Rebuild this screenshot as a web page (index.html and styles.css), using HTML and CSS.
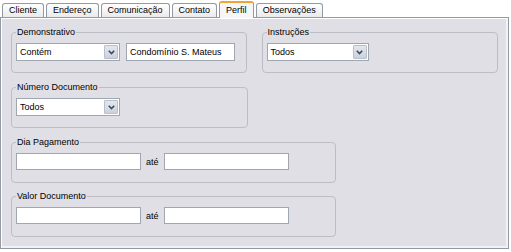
FILE: index.html
```html
<!DOCTYPE html>
<html lang="pt-BR">
<head>
  <meta charset="UTF-8">
  <title>Perfil</title>
  <link rel="stylesheet" href="styles.css">
</head>
<body>

  <div class="window">
    <div class="tabs">
      <div class="tab">Cliente</div>
      <div class="tab">Endereço</div>
      <div class="tab">Comunicação</div>
      <div class="tab">Contato</div>
      <div class="tab active">Perfil</div>
      <div class="tab">Observações</div>
    </div>

    <div class="panel">
      <div class="row">
        <fieldset class="group group-half">
          <legend>Demonstrativo</legend>
          <div class="line">
            <div class="combo combo-sm">
              <span class="combo-text">Contém</span>
              <span class="arrow"><svg width="7" height="5" viewBox="0 0 7 5"><path d="M0.8 0.8 L3.5 3.6 L6.2 0.8" fill="none" stroke="#3d4a63" stroke-width="1.6"/></svg></span>
            </div>
            <div class="field field-sm">Condomínio S. Mateus</div>
          </div>
        </fieldset>

        <fieldset class="group group-half group-right">
          <legend>Instruções</legend>
          <div class="line">
            <div class="combo combo-xs">
              <span class="combo-text">Todos</span>
              <span class="arrow"><svg width="7" height="5" viewBox="0 0 7 5"><path d="M0.8 0.8 L3.5 3.6 L6.2 0.8" fill="none" stroke="#3d4a63" stroke-width="1.6"/></svg></span>
            </div>
          </div>
        </fieldset>
      </div>

      <fieldset class="group group-half">
        <legend>Número Documento</legend>
        <div class="line">
          <div class="combo combo-sm">
            <span class="combo-text">Todos</span>
            <span class="arrow"><svg width="7" height="5" viewBox="0 0 7 5"><path d="M0.8 0.8 L3.5 3.6 L6.2 0.8" fill="none" stroke="#3d4a63" stroke-width="1.6"/></svg></span>
          </div>
        </div>
      </fieldset>

      <fieldset class="group group-wide">
        <legend>Dia Pagamento</legend>
        <div class="line">
          <div class="field field-md"></div>
          <span class="sep">até</span>
          <div class="field field-md"></div>
        </div>
      </fieldset>

      <fieldset class="group group-wide">
        <legend>Valor Documento</legend>
        <div class="line">
          <div class="field field-md"></div>
          <span class="sep">até</span>
          <div class="field field-md"></div>
        </div>
      </fieldset>
    </div>
  </div>

</body>
</html>
```

FILE: styles.css
```css
html, body {
  margin: 0;
  padding: 0;
  background: #fff;
  font-family: "Liberation Sans", Arial, sans-serif;
  font-size: 9px;
  color: #000;
}

.window {
  width: 509px;
}

/* tabs */
.tabs {
  display: flex;
  align-items: flex-end;
  gap: 2px;
  height: 17px;
  padding-left: 2px;
  position: relative;
  z-index: 1;
}

.tab {
  box-sizing: border-box;
  height: 14px;
  line-height: 12px;
  padding: 0 6px;
  border: 1px solid #939aa3;
  border-bottom: none;
  border-radius: 3px 3px 0 0;
  background: linear-gradient(#ffffff, #ebebee);
  white-space: nowrap;
}

.tab.active {
  height: 17px;
  line-height: 14px;
  margin-bottom: -1px;
  border-top: 2px solid #f0a33a;
  background: #f6f6f8;
}

/* panel */
.panel {
  box-sizing: border-box;
  height: 232px;
  padding: 9px 10px 0;
  border: 1px solid #939aa3;
  background: #dfdfe5;
  box-shadow: inset 1px 1px 0 #fff, inset -2px -2px 0 #f2f2f4;
}

.row {
  display: flex;
  gap: 15px;
}

.group {
  box-sizing: border-box;
  margin: 0 0 9px;
  padding: 5px 4px 11px;
  border: 1px solid #bdbdc6;
  border-radius: 4px;
}

.group legend {
  padding: 0 1px;
  line-height: 11px;
}

.group-half {
  width: 237px;
}

.group-right {
  width: 238px;
}

.group-wide {
  width: 325px;
  padding-bottom: 12px;
}

.group-wide:last-child {
  margin-top: -1px;
}

.line {
  display: flex;
  align-items: center;
  gap: 6px;
}

/* inputs */
.combo, .field {
  box-sizing: border-box;
  height: 18px;
  border: 1px solid #a1a7b1;
  background: #fff;
  line-height: 16px;
  white-space: nowrap;
}

.combo {
  display: flex;
  justify-content: space-between;
  padding: 0 1px 0 3px;
}

.combo-sm {
  width: 104px;
}

.combo-xs {
  width: 102px;
}

.arrow {
  box-sizing: border-box;
  display: flex;
  align-items: center;
  justify-content: center;
  width: 14px;
  height: 14px;
  margin-top: 1px;
  border: 1px solid #b9c0cc;
  border-radius: 1px;
  background: linear-gradient(#e3e7ee, #ccd2dd);
}

.field {
  padding: 0 3px;
}

.field-sm {
  width: 109px;
}

.field-md {
  width: 125px;
  height: 17px;
}

.sep {
  margin: 0 -1px;
}
```
